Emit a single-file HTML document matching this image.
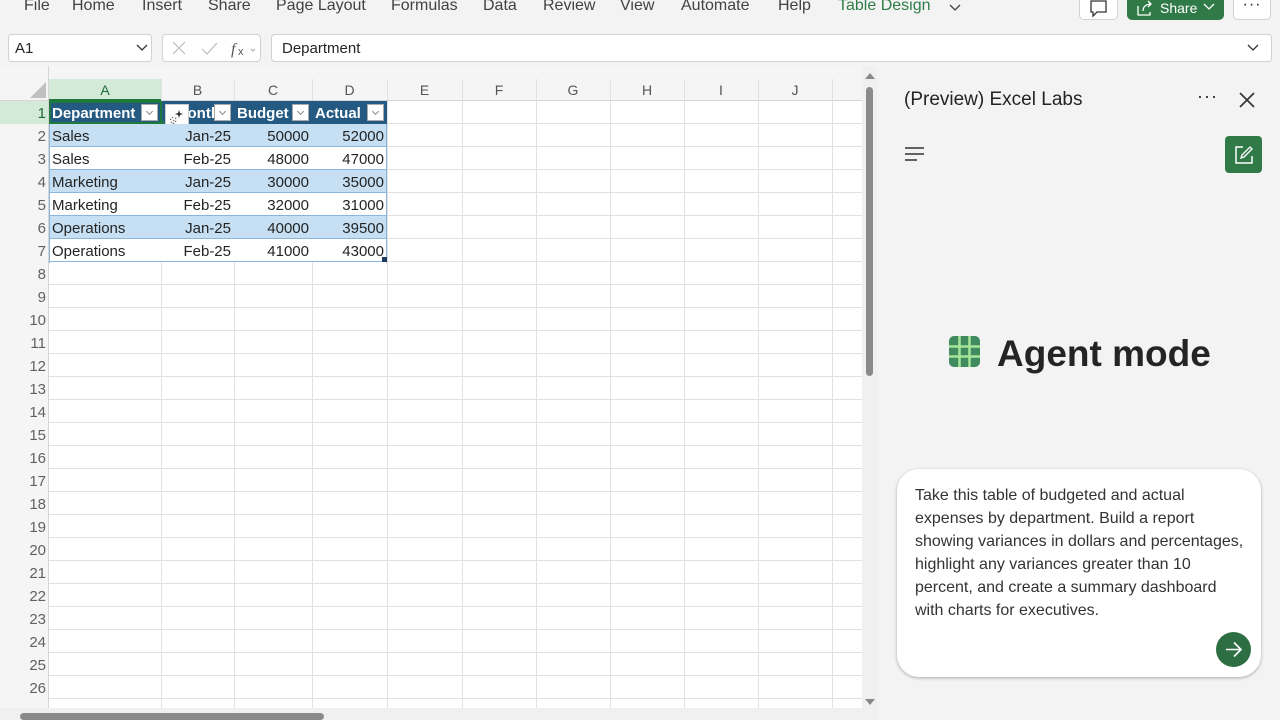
<!DOCTYPE html>
<html><head><meta charset="utf-8"><style>
*{margin:0;padding:0;box-sizing:border-box}
body{width:1280px;height:720px;overflow:hidden;background:#f3f3f3;font-family:"Liberation Sans",sans-serif;position:relative;color:#242424}
.a{position:absolute}
.menu span{position:absolute;top:-3px;font-size:16px;color:#424242}
.grid{left:49px;top:101px;width:813px;height:607px;background:#fff;
background-image:linear-gradient(to bottom,#e1e1e1 1px,transparent 1px);background-size:100% 23px;background-position:0 22px}
.vl{position:absolute;top:79px;width:1px;height:629px;background:#e1e1e1}
.ch{position:absolute;top:79px;height:22px;font-size:14px;color:#555;text-align:center;line-height:22px;border-bottom:1px solid #d6d6d6}
.rn{position:absolute;left:0;width:46px;text-align:right;font-size:15px;color:#616161;height:23px;line-height:26px}
.row{position:absolute;left:49px;width:338px;height:23px;font-size:15px;line-height:26px;border-bottom:1px solid #8ab6dd}
.row span{position:absolute}
.dd{position:absolute;top:3px;width:17px;height:17px;background:#fff;border:1px solid #aaa}
.dd:after{content:"";position:absolute;left:5px;top:4px;width:4px;height:4px;border-right:1px solid #888;border-bottom:1px solid #888;transform:rotate(45deg)}
</style></head><body>
<div class="menu">
<span style="left:24px">File</span><span style="left:72px">Home</span><span style="left:142px">Insert</span><span style="left:208px">Share</span><span style="left:276px">Page Layout</span><span style="left:391px">Formulas</span><span style="left:483px">Data</span><span style="left:543px">Review</span><span style="left:620px">View</span><span style="left:681px">Automate</span><span style="left:778px">Help</span><span style="left:838px;color:#2e7d47">Table Design</span>
</div>
<svg class="a" style="left:948px;top:1px" width="14" height="12"><path d="M2 4l5 5 5-5" fill="none" stroke="#444" stroke-width="1.3"/></svg>
<div class="a" style="left:1079px;top:-6px;width:39px;height:26px;background:#fff;border:1px solid #d1d1d1;border-radius:5px"></div>
<svg class="a" style="left:1089px;top:0" width="20" height="18"><path d="M2 1h15v11H8l-4 4v-4H2z" fill="none" stroke="#333" stroke-width="1.3"/></svg>
<div class="a" style="left:1127px;top:-6px;width:97px;height:26px;background:#2f7a46;border-radius:5px;color:#fff;font-size:14px;line-height:28px;padding-left:33px">Share</div>
<svg class="a" style="left:1135px;top:0" width="20" height="18"><path d="M3 6v9h12v-3M8 11c0-5 4-7 8-7M13 1l3 3-3 3" fill="none" stroke="#fff" stroke-width="1.3"/></svg>
<svg class="a" style="left:1202px;top:2px" width="14" height="10"><path d="M2 2l5 5 5-5" fill="none" stroke="#fff" stroke-width="1.3"/></svg>
<div class="a" style="left:1233px;top:-6px;width:38px;height:26px;background:#fff;border:1px solid #d1d1d1;border-radius:5px;text-align:center;font-size:16px;line-height:20px;letter-spacing:1px">···</div>
<div class="a" style="left:8px;top:34px;width:144px;height:28px;background:#fff;border:1px solid #d1d1d1;border-radius:4px;font-size:15px;line-height:27px;padding-left:6px">A1</div>
<svg class="a" style="left:135px;top:42px" width="14" height="12"><path d="M2 3l5 5 5-5" fill="none" stroke="#333" stroke-width="1.3"/></svg>
<div class="a" style="left:162px;top:34px;width:99px;height:28px;background:#fff;border:1px solid #d1d1d1;border-radius:4px"></div>
<svg class="a" style="left:170px;top:40px" width="90" height="18"><path d="M3 2l12 12M15 2L3 14" stroke="#bbb" stroke-width="1.2"/><path d="M32 9l5 5 10-11" fill="none" stroke="#bbb" stroke-width="1.2"/><text x="61" y="14" font-family="Liberation Serif" font-style="italic" font-size="16" fill="#555">f</text><text x="68" y="15" font-family="Liberation Sans" font-size="11" fill="#555">x</text><path d="M81 9l2 2 2-2" fill="none" stroke="#aaa"/></svg>
<div class="a" style="left:271px;top:34px;width:1001px;height:28px;background:#fff;border:1px solid #d1d1d1;border-radius:4px;font-size:15px;line-height:27px;padding-left:10px">Department</div>
<svg class="a" style="left:1246px;top:42px" width="14" height="12"><path d="M2 3l5 5 5-5" fill="none" stroke="#333" stroke-width="1.3"/></svg>
<div class="a" style="left:0;top:66px;width:862px;height:642px;background:#f5f5f5"></div>
<div class="a grid"></div>
<div class="a" style="left:0;top:79px;width:862px;height:22px;background:#f5f5f5;border-bottom:1px solid #d6d6d6"></div>
<svg class="a" style="left:30px;top:82px" width="17" height="16"><path d="M16 0v16H0z" fill="#c0c0c0"/></svg>
<div class="a" style="left:48px;top:66px;width:1px;height:642px;background:#d6d6d6"></div>
<div class="vl" style="left:161px"></div><div class="vl" style="left:234px"></div><div class="vl" style="left:312px"></div><div class="vl" style="left:387px"></div><div class="vl" style="left:462px"></div><div class="vl" style="left:536px"></div><div class="vl" style="left:610px"></div><div class="vl" style="left:684px"></div><div class="vl" style="left:758px"></div><div class="vl" style="left:832px"></div>
<div class="ch" style="left:49px;width:112px;background:#d3ead8;color:#1e6b35;border-bottom:2px solid #1e7a3c">A</div>
<div class="ch" style="left:161px;width:73px">B</div><div class="ch" style="left:234px;width:78px">C</div><div class="ch" style="left:312px;width:75px">D</div><div class="ch" style="left:387px;width:75px">E</div><div class="ch" style="left:462px;width:74px">F</div><div class="ch" style="left:536px;width:74px">G</div><div class="ch" style="left:610px;width:74px">H</div><div class="ch" style="left:684px;width:74px">I</div><div class="ch" style="left:758px;width:74px">J</div>
<div class="a" style="left:0;top:101px;width:48px;height:23px;background:#d3ead8"></div>
<div class="rn" style="top:101px;color:#1e6b35">1</div>
<div class="rn" style="top:124px">2</div><div class="rn" style="top:147px">3</div><div class="rn" style="top:170px">4</div><div class="rn" style="top:193px">5</div><div class="rn" style="top:216px">6</div><div class="rn" style="top:239px">7</div><div class="rn" style="top:262px">8</div><div class="rn" style="top:285px">9</div><div class="rn" style="top:308px">10</div><div class="rn" style="top:331px">11</div><div class="rn" style="top:354px">12</div><div class="rn" style="top:377px">13</div><div class="rn" style="top:400px">14</div><div class="rn" style="top:423px">15</div><div class="rn" style="top:446px">16</div><div class="rn" style="top:469px">17</div><div class="rn" style="top:492px">18</div><div class="rn" style="top:515px">19</div><div class="rn" style="top:538px">20</div><div class="rn" style="top:561px">21</div><div class="rn" style="top:584px">22</div><div class="rn" style="top:607px">23</div><div class="rn" style="top:630px">24</div><div class="rn" style="top:653px">25</div><div class="rn" style="top:676px">26</div>
<div class="row" style="top:101px;background:#245a82;color:#fff;font-weight:bold;border:none">
<span style="left:3px">Department</span><div class="dd" style="left:92px"></div>
<span style="left:126px">Month</span><div class="dd" style="left:165px"></div>
<span style="left:188px">Budget</span><div class="dd" style="left:243px"></div>
<span style="left:266px">Actual</span><div class="dd" style="left:318px"></div>
</div>
<div class="a" style="left:49px;top:101px;width:113px;height:23px;border:2px solid #1e7a3c"></div>
<div class="a" style="left:159px;top:121px;width:5px;height:5px;background:#1e7a3c"></div>
<div class="a" style="left:165px;top:104px;width:24px;height:25px;background:#fff;border:1px solid #ccc"></div>
<svg class="a" style="left:168px;top:108px" width="18" height="18"><path d="M11 2l1 3 3 1-3 1-1 3-1-3-3-1 3-1z" fill="#333"/><path d="M3 15l6-6M5 16l4-4M2 12l3-3" stroke="#555" stroke-dasharray="1.5 1.5"/></svg>
<div class="row" style="top:124px;background:#c6dff2"><span style="left:3px">Sales</span><span style="right:156px">Jan-25</span><span style="right:78px">50000</span><span style="right:3px">52000</span></div>
<div class="row" style="top:147px;background:#fff"><span style="left:3px">Sales</span><span style="right:156px">Feb-25</span><span style="right:78px">48000</span><span style="right:3px">47000</span></div>
<div class="row" style="top:170px;background:#c6dff2"><span style="left:3px">Marketing</span><span style="right:156px">Jan-25</span><span style="right:78px">30000</span><span style="right:3px">35000</span></div>
<div class="row" style="top:193px;background:#fff"><span style="left:3px">Marketing</span><span style="right:156px">Feb-25</span><span style="right:78px">32000</span><span style="right:3px">31000</span></div>
<div class="row" style="top:216px;background:#c6dff2"><span style="left:3px">Operations</span><span style="right:156px">Jan-25</span><span style="right:78px">40000</span><span style="right:3px">39500</span></div>
<div class="row" style="top:239px;background:#fff"><span style="left:3px">Operations</span><span style="right:156px">Feb-25</span><span style="right:78px">41000</span><span style="right:3px">43000</span></div>
<div class="a" style="left:49px;top:124px;width:338px;height:139px;border-left:1px solid #8ab6dd;border-right:1px solid #8ab6dd"></div>
<div class="a" style="left:382px;top:257px;width:5px;height:5px;background:#1f3a5f"></div>
<div class="a" style="left:862px;top:66px;width:15px;height:642px;background:#f0f0f0"></div>
<svg class="a" style="left:864px;top:71px" width="12" height="10"><path d="M1 8h10L6 2z" fill="#888"/></svg>
<svg class="a" style="left:864px;top:697px" width="12" height="10"><path d="M1 2h10L6 8z" fill="#888"/></svg>
<div class="a" style="left:866px;top:87px;width:7px;height:289px;background:#8a8a8a;border-radius:4px"></div>
<div class="a" style="left:0;top:708px;width:877px;height:12px;background:#f0f0f0"></div>
<div class="a" style="left:20px;top:713px;width:304px;height:7px;background:#8a8a8a;border-radius:4px"></div>
<div class="a" style="left:904px;top:89px;font-size:19px;color:#242424">(Preview) Excel Labs</div>
<div class="a" style="left:1197px;top:86px;font-size:18px;letter-spacing:1px">···</div>
<svg class="a" style="left:1238px;top:91px" width="18" height="18"><path d="M2 2l14 14M16 2L2 16" stroke="#333" stroke-width="1.6"/></svg>
<svg class="a" style="left:904px;top:146px" width="22" height="16"><path d="M1 2h19M1 8h19M1 14h12" stroke="#333" stroke-width="1.6"/></svg>
<div class="a" style="left:1225px;top:136px;width:37px;height:37px;background:#2f7a46;border-radius:4px"></div>
<svg class="a" style="left:1234px;top:145px" width="20" height="20"><path d="M9 2H2v16h16v-7" fill="none" stroke="#fff" stroke-width="1.5"/><path d="M7 13l1-3 8-8 2 2-8 8z" fill="none" stroke="#fff" stroke-width="1.3"/></svg>
<svg class="a" style="left:949px;top:336px" width="31" height="31"><rect width="31" height="31" rx="5" fill="#3f8a5e"/><path d="M10.5 0v31M20.5 0v31M0 10.5h31M0 20.5h31" stroke="#a8e59a" stroke-width="2.5"/></svg>
<div class="a" style="left:997px;top:333px;font-size:37px;font-weight:bold;color:#242424">Agent mode</div>
<div class="a" style="left:897px;top:469px;width:364px;height:208px;background:#fff;border-radius:22px;box-shadow:0 1px 3px rgba(0,0,0,.3)"></div>
<div class="a" style="left:915px;top:484px;width:330px;font-size:16px;line-height:23px;color:#333">Take this table of budgeted and actual expenses by department. Build a report showing variances in dollars and percentages, highlight any variances greater than 10 percent, and create a summary dashboard with charts for executives.</div>
<div class="a" style="left:1216px;top:632px;width:35px;height:35px;background:#2d6e42;border-radius:50%"></div>
<svg class="a" style="left:1223px;top:639px" width="21" height="21"><path d="M3 10.5h15M11 3.5l7 7-7 7" fill="none" stroke="#fff" stroke-width="1.6"/></svg>
</body></html>
